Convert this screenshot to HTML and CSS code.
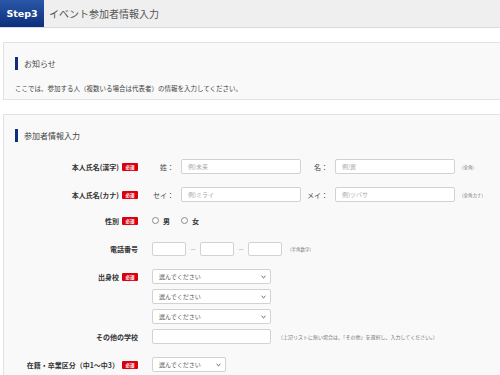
FILE: index.html
```html
<!DOCTYPE html>
<html lang="ja">
<head>
<meta charset="utf-8">
<link rel="stylesheet" href="styles.css">
</head>
<body>
<div class="header">
  <div class="step">Step3</div>
  <div class="header-title">イベント参加者情報入力</div>
</div>

<div class="panel panel-notice">
  <div class="panel-title">お知らせ</div>
  <p class="notice">ここでは、参加する人（複数いる場合は代表者）の情報を入力してください。</p>
</div>

<div class="panel panel-form">
  <div class="panel-title">参加者情報入力</div>
  <div class="form">
    <div class="row r1">
      <div class="label"><span>本人氏名(漢字)</span><span class="badge">必須</span></div>
      <div class="content">
        <span class="sub">姓：</span><input class="text name" placeholder="例)未来">
        <span class="sub sub2">名：</span><input class="text name" placeholder="例)翼">
        <span class="note">(全角)</span>
      </div>
    </div>
    <div class="row r2">
      <div class="label"><span>本人氏名(カナ)</span><span class="badge">必須</span></div>
      <div class="content">
        <span class="sub">セイ：</span><input class="text name" placeholder="例)ミライ">
        <span class="sub sub2">メイ：</span><input class="text name" placeholder="例)ツバサ">
        <span class="note">(全角カナ)</span>
      </div>
    </div>
    <div class="row r3">
      <div class="label"><span>性別</span><span class="badge">必須</span></div>
      <div class="content">
        <span class="radio"></span><span class="rlabel">男</span>
        <span class="radio radio2"></span><span class="rlabel">女</span>
      </div>
    </div>
    <div class="row r4">
      <div class="label"><span>電話番号</span></div>
      <div class="content">
        <input class="text tel"><span class="dash">－</span><input class="text tel"><span class="dash">－</span><input class="text tel">
        <span class="note note-tel">(半角数字)</span>
      </div>
    </div>
    <div class="row r5">
      <div class="label top"><span>出身校</span><span class="badge">必須</span></div>
      <div class="content stack">
        <div class="select"><span>選んでください</span><svg width="5" height="4" viewBox="0 0 5 4"><path d="M0.6 1 L2.5 2.8 L4.4 1" fill="none" stroke="#444" stroke-width="0.9"/></svg></div>
        <div class="select"><span>選んでください</span><svg width="5" height="4" viewBox="0 0 5 4"><path d="M0.6 1 L2.5 2.8 L4.4 1" fill="none" stroke="#444" stroke-width="0.9"/></svg></div>
        <div class="select"><span>選んでください</span><svg width="5" height="4" viewBox="0 0 5 4"><path d="M0.6 1 L2.5 2.8 L4.4 1" fill="none" stroke="#444" stroke-width="0.9"/></svg></div>
      </div>
    </div>
    <div class="row r6">
      <div class="label"><span>その他の学校</span></div>
      <div class="content">
        <input class="text other"><span class="note note-other">（上記リストに無い場合は、「その他」を選択し、入力してください。）</span>
      </div>
    </div>
    <div class="row r7">
      <div class="label"><span>在籍・卒業区分（中1～中3）</span><span class="badge">必須</span></div>
      <div class="content">
        <div class="select short"><span>選んでください</span><svg width="5" height="4" viewBox="0 0 5 4"><path d="M0.6 1 L2.5 2.8 L4.4 1" fill="none" stroke="#444" stroke-width="0.9"/></svg></div>
      </div>
    </div>
  </div>
</div>
</body>
</html>
```

FILE: styles.css
```css
html, body {
  margin: 0;
  padding: 0;
  background: #ffffff;
  overflow: hidden;
}
body {
  font-family: "Noto Sans CJK JP", "Noto Sans", sans-serif;
  color: #333;
  width: 500px;
  height: 375px;
}
.header {
  display: flex;
  align-items: center;
  height: 27px;
  background: #efefef;
  border-bottom: 1px solid #d6dbe2;
}
.step {
  width: 44px;
  height: 27px;
  display: flex;
  align-items: center;
  justify-content: center;
  background: linear-gradient(#2a57a8, #0d2f7c);
  color: #fff;
  font-family: "DejaVu Sans", sans-serif;
  font-weight: bold;
  font-size: 9.5px;
}
.header-title {
  margin-left: 5px;
  font-size: 10px;
  color: #555;
}
.panel {
  box-sizing: border-box;
  width: 497px;
  margin: 14px 0 0 3px;
  background: #f9f9f9;
  border: 1px solid #e2e2e2;
  border-right: none;
  padding: 14px 0 0 11px;
}
.panel-notice {
  height: 58px;
}
.panel-form {
  height: 262px;
}
.panel-title {
  height: 13px;
  line-height: 13px;
  border-left: 3px solid #0d2f7c;
  padding-left: 6px;
  font-size: 8px;
  color: #444;
}
.notice {
  margin: 14px 0 0 0;
  font-size: 6.5px;
  line-height: 9px;
  color: #444;
}
.form {
  margin-top: 17px;
}
.row {
  display: flex;
  align-items: center;
}
.r1 { margin-bottom: 13px; }
.r2 { margin-bottom: 11px; }
.r3 { margin-bottom: 13px; height: 15px; }
.r4 { margin-bottom: 13px; }
.r5 { margin-bottom: 5px; align-items: flex-start; }
.r6 { margin-bottom: 13px; }
.label {
  width: 123px;
  flex: none;
  display: flex;
  justify-content: flex-end;
  align-items: center;
  gap: 3px;
  font-size: 7px;
  font-weight: bold;
  color: #333;
  height: 15px;
}
.badge {
  display: inline-flex;
  align-items: center;
  justify-content: center;
  width: 16px;
  height: 8px;
  background: #d9000f;
  color: #fff;
  font-size: 4.5px;
  font-weight: bold;
  border-radius: 1px;
}
.content {
  margin-left: 14px;
  display: flex;
  align-items: center;
}
.sub {
  width: 22px;
  text-align: right;
  font-size: 7px;
  color: #444;
  margin-right: 7px;
}
.sub2 {
  margin-left: 5px;
}
.text {
  box-sizing: border-box;
  height: 15px;
  margin: 0;
  padding: 0 0 0 6px;
  background: #fff;
  border: 1px solid #d2d2d2;
  border-radius: 2px;
  font-family: inherit;
  font-size: 6px;
  outline: none;
}
.text::placeholder {
  color: #aaa;
}
.name {
  width: 120px;
}
.note {
  margin-left: 7px;
  font-size: 4.5px;
  color: #777;
}
.note-tel { margin-left: 8px; }
.note-other { margin-left: 7px; font-size: 5px; }
.radio {
  box-sizing: border-box;
  width: 7px;
  height: 7px;
  border: 1px solid #888;
  border-radius: 50%;
  background: #fff;
}
.radio2 {
  margin-left: 11px;
}
.rlabel {
  margin-left: 4px;
  font-size: 7px;
  font-weight: bold;
  color: #333;
}
.tel {
  width: 34px;
  height: 14px;
}
.dash {
  width: 14px;
  text-align: center;
  font-size: 6px;
  color: #999;
}
.stack {
  flex-direction: column;
  align-items: flex-start;
  gap: 5px;
}
.select {
  box-sizing: border-box;
  width: 119px;
  height: 15px;
  display: flex;
  align-items: center;
  justify-content: space-between;
  padding: 0 4px 0 6px;
  background: #fff;
  border: 1px solid #d2d2d2;
  border-radius: 2px;
  font-size: 6px;
  color: #555;
}
.select svg {
  display: block;
}
.short {
  width: 74px;
}
.other {
  width: 119px;
}
```
